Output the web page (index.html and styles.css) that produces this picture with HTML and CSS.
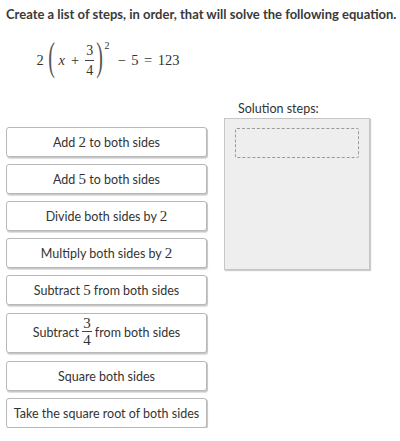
FILE: index.html
```html
<!DOCTYPE html>
<html>
<head>
<meta charset="utf-8">
<link rel="stylesheet" href="styles.css">
</head>
<body>
<div class="page">
  <div class="title">Create a list of steps, in order, that will solve the following equation.</div>
  <div class="equation">
    <span class="num">2</span>
    <span class="paren lp">(</span>
    <span class="var">x</span>
    <span class="op">+</span>
    <span class="frac"><span class="fn">3</span><span class="fd">4</span></span>
    <span class="paren rp">)</span>
    <span class="sup">2</span>
    <span class="op">−</span>
    <span class="num">5</span>
    <span class="op">=</span>
    <span class="num">123</span>
  </div>
  <div class="main">
    <div class="choices">
      <div class="card"><span>Add <span class="m">2</span> to both sides</span></div>
      <div class="card"><span>Add <span class="m">5</span> to both sides</span></div>
      <div class="card"><span>Divide both sides by <span class="m">2</span></span></div>
      <div class="card"><span>Multiply both sides by <span class="m">2</span></span></div>
      <div class="card"><span>Subtract <span class="m">5</span> from both sides</span></div>
      <div class="card tall"><span>Subtract <span class="sfrac"><span class="sfn">3</span><span class="sfd">4</span></span> from both sides</span></div>
      <div class="card"><span>Square both sides</span></div>
      <div class="card"><span>Take the square root of both sides</span></div>
    </div>
    <div class="solution">
      <div class="label">Solution steps:</div>
      <div class="box">
        <div class="slot"></div>
      </div>
    </div>
  </div>
</div>
</body>
</html>
```
FILE: styles.css
```css
html, body {
  margin: 0;
  padding: 0;
  background: #fff;
}
.page {
  padding: 6px 0 0 6px;
  font-family: "Lato", "Liberation Sans", sans-serif;
  color: #333;
}
.title {
  font-size: 13px;
  font-weight: 700;
  color: #3a3a3a;
  line-height: 16px;
}
.equation {
  display: flex;
  align-items: center;
  height: 48px;
  margin-top: 14px;
  margin-left: 30px;
  font-family: "Liberation Serif", "DejaVu Serif", "Times New Roman", serif;
  font-size: 14.5px;
  color: #333;
}
.equation .num { margin: 0 0.5px; }
.equation .var { font-style: italic; margin: 0 1px 0 3px; }
.equation .op { margin: 0 5px; }
.equation .paren {
  font-size: 40px;
  line-height: 1;
  transform: scaleX(0.5);
  color: #555;
  position: relative;
  top: -3px;
}
.equation .lp { margin: 0 -3px 0 1px; }
.equation .rp { margin: 0 -3px 0 -2px; }
.frac {
  display: inline-flex;
  flex-direction: column;
  align-items: center;
  margin: 0 1px;
  font-size: 14px;
  line-height: 17px;
}
.fn {
  border-bottom: 1px solid #444;
  padding: 0 1px 1px;
}
.fd { padding-top: 1px; }
.sup {
  align-self: flex-start;
  font-size: 10px;
  margin-top: 4px;
  margin-left: 1px;
  margin-right: 3px;
}
.main {
  display: flex;
  margin-top: 17px;
}
.choices {
  display: flex;
  flex-direction: column;
  gap: 7px;
  width: 201px;
  padding-top: 26px;
}
.card {
  box-sizing: border-box;
  height: 30px;
  border: 1px solid #b8b8b8;
  border-radius: 3px;
  box-shadow: 1px 1px 0 0 #c8c8c8, 1px 2px 1px 0 #ddd;
  background: #fff;
  display: flex;
  align-items: center;
  justify-content: center;
  font-size: 12.5px;
  color: #333;
  white-space: nowrap;
}
.card.tall {
  height: 40px;
  margin-top: 1px;
  margin-bottom: 1px;
}
.m {
  font-family: "Liberation Serif", "DejaVu Serif", serif;
  font-size: 15px;
}
.sfrac {
  display: inline-flex;
  flex-direction: column;
  align-items: center;
  vertical-align: middle;
  font-family: "Liberation Serif", "DejaVu Serif", serif;
  font-size: 15px;
  line-height: 16px;
  position: relative;
  top: -2px;
}
.sfn { border-bottom: 1px solid #444; padding: 0 1px; }
.solution {
  margin-left: 17px;
  display: flex;
  flex-direction: column;
}
.label {
  font-size: 12.5px;
  color: #333;
  margin-left: 14px;
  line-height: 16px;
  height: 16px;
}
.box {
  margin-top: 1px;
  box-sizing: border-box;
  width: 146px;
  height: 152px;
  background: #eeeeee;
  border: 1px solid #c6c6c6;
  box-shadow: 1px 1px 1px #ccc;
  padding: 9px 10px;
}
.slot {
  box-sizing: border-box;
  height: 30px;
  border: 1px dashed #999;
  border-radius: 2px;
}
```
